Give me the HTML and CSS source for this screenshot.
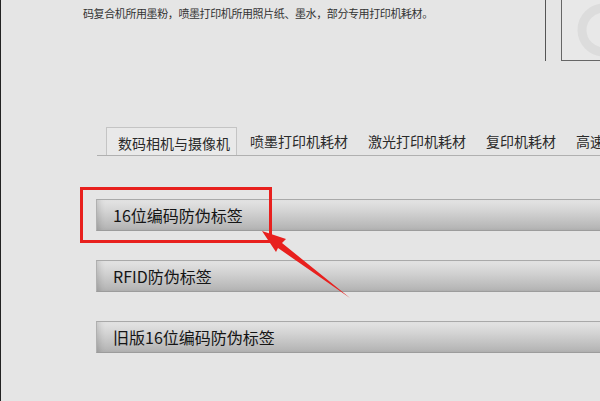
FILE: index.html
```html
<!DOCTYPE html>
<html lang="zh-CN">
<head>
  <meta charset="UTF-8"/>
  <title>防伪标签</title>
  <link rel="stylesheet" href="styles.css">
</head>
<body>
  <div class="page">
    <div class="header">
      <p class="intro">码复合机所用墨粉，喷墨打印机所用照片纸、墨水，部分专用打印机耗材。</p>
      <div class="divider"></div>
      <div class="side-box">
        <svg class="ghost" width="40" height="60" viewBox="0 0 40 60">
          <circle cx="42" cy="30" r="22" fill="none" stroke="#dcdcdc" stroke-width="9"/>
        </svg>
      </div>
    </div>

    <ul class="tabs">
      <li class="tab active">数码相机与摄像机</li>
      <li class="tab">喷墨打印机耗材</li>
      <li class="tab">激光打印机耗材</li>
      <li class="tab">复印机耗材</li>
      <li class="tab">高速</li>
    </ul>

    <div class="bars">
      <div class="bar">16位编码防伪标签</div>
      <div class="bar">RFID防伪标签</div>
      <div class="bar">旧版16位编码防伪标签</div>
    </div>

    <!-- annotation over the first bar -->
    <div class="mark-box"></div>
    <svg class="mark-arrow" width="600" height="401" viewBox="0 0 600 401">
      <polygon fill="#e8201e" points="262,231 286,239 282,243 350,298 278,248 276,252"/>
    </svg>
  </div>
</body>
</html>
```

FILE: styles.css
```css
html, body {
  margin: 0;
  padding: 0;
}

body {
  background-color: #e5e5e5;
  font-family: "Noto Sans CJK SC", "Liberation Sans", sans-serif;
  color: #222;
}

.page {
  position: relative;
  width: 599px;
  height: 401px;
  overflow: hidden;
  border-left: 1px solid #222;
}

.header {
  display: flex;
  height: 61px;
}

.intro {
  flex: 1;
  margin: 0;
  padding: 5px 0 0 82px;
  font-size: 11px;
  line-height: 16px;
  letter-spacing: -0.4px;
  color: #333;
}

.divider {
  width: 1px;
  height: 61px;
  background-color: #555;
  margin-right: 15px;
}

.side-box {
  width: 38px;
  height: 60px;
  border-left: 1px solid #666;
  border-bottom: 1px solid #666;
  background-color: #e8e8e8;
  overflow: hidden;
}

.ghost {
  display: block;
}

.tabs {
  display: flex;
  list-style: none;
  margin: 66px 0 0 96px;
  padding: 0 0 0 9px;
  height: 28px;
  border-bottom: 1px solid #b0b0b0;
  white-space: nowrap;
  overflow: hidden;
}

.tab {
  padding: 1px 10px 0;
  font-size: 14px;
  line-height: 27px;
  color: #2a2a2a;
  flex-shrink: 0;
}

.tab.active {
  padding-left: 11px;
  padding-right: 6px;
  border: 1px solid #c4c4c4;
  border-bottom: none;
  background-color: #e9e9e9;
  margin-bottom: -1px;
  line-height: 28px;
}

.tab.active + .tab {
  padding-left: 13px;
}

.bars {
  display: flex;
  flex-direction: column;
  gap: 29px;
  margin: 43px 0 0 95px;
}

.bar {
  height: 30px;
  line-height: 30px;
  padding-left: 16px;
  font-size: 16px;
  color: #151515;
  border-top: 1px solid #a9a9a9;
  border-bottom: 1px solid #9c9c9c;
  border-left: 1px solid #b0b0b0;
  background: linear-gradient(to bottom, #e4e4e4 0%, #d2d2d2 40%, #bdbdbd 80%, #b2b2b2 100%);
  box-shadow: inset 6px 0 6px -4px rgba(0, 0, 0, 0.15);
}

.mark-box {
  position: absolute;
  left: 79px;
  top: 187px;
  width: 186px;
  height: 50px;
  border: 3px solid #e8201e;
}

.mark-arrow {
  position: absolute;
  left: -1px;
  top: 0;
  pointer-events: none;
}
```
